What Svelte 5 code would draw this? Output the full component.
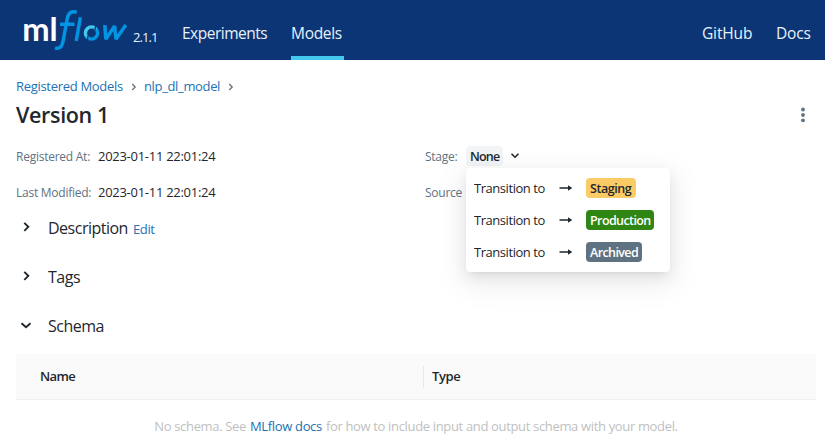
<script>
  const stages = [
    { name: 'Staging', kind: 'staging' },
    { name: 'Production', kind: 'production' },
    { name: 'Archived', kind: 'archived' },
  ];
  const sections = [
    { title: 'Description', edit: true, open: false },
    { title: 'Tags', edit: false, open: false },
    { title: 'Schema', edit: false, open: true },
  ];
</script>

{#snippet chevron(open)}
  <svg class="chevron" width="12" height="12" viewBox="0 0 12 12">
    <path d={open ? 'M1.5 4.2 6 8.2 10.5 4.2' : 'M4.3 1.8 8.3 5.8 4.3 9.8'} fill="none" stroke="currentColor" stroke-width="1.9" />
  </svg>
{/snippet}

<div class="page">
  <header>
    <svg class="logo" width="106" height="44" viewBox="0 0 106 44" role="img" aria-label="mlflow">
      <defs>
        <linearGradient id="ring" x1="0" y1="0" x2="1" y2="1">
          <stop offset="0.35" stop-color="#43c9ed" />
          <stop offset="0.65" stop-color="#0194e2" />
        </linearGradient>
      </defs>
      <text class="ml" x="-0.8" y="35" textLength="35.5" lengthAdjust="spacingAndGlyphs">ml</text>
      <path class="stroke" d="M53.8 6.3C48 4.6 45.3 7 44.3 12.5L40.3 34C39.2 40.5 36.8 43.5 32 41.8M37 18.2H51.5" />
      <path class="stroke" d="M57.4 11.3 53.2 35" />
      <circle cx="68.5" cy="27" r="6.1" fill="none" stroke="url(#ring)" stroke-width="3.4" />
      <path d="M64.5 34.5 65 29.500M72.500 19.500 72 24.500" stroke="#0b3574" stroke-width="1.300" />
      <path class="stroke" d="M81.8 19 82.8 33.2 91.6 20 92.9 33.2 102.8 19" />
    </svg>
    <span class="version">2.1.1</span>
    <nav>
      <a class="experiments" href="#experiments">Experiments</a>
      <a class="models" href="#models">Models</a>
    </nav>
    <nav class="right">
      <a class="github" href="#github">GitHub</a>
      <a class="docs" href="#docs">Docs</a>
    </nav>
  </header>

  <main>
    <div class="crumbs">
      <a class="registered" href="#models">Registered Models</a>
      <svg width="6" height="8" viewBox="0 0 6 8"><path d="M1.2 1 4.2 4 1.2 7" /></svg>
      <a class="model" href="#model">nlp_dl_model</a>
      <svg width="6" height="8" viewBox="0 0 6 8"><path d="M1.2 1 4.2 4 1.2 7" /></svg>
    </div>
    <div class="heading">
      <h1>Version 1</h1>
      <svg width="6" height="16" viewBox="0 0 6 16" fill="#5f7281"><circle cx="3" cy="2.5" r="1.9" /><circle cx="3" cy="8" r="1.9" /><circle cx="3" cy="13.3" r="1.9" /></svg>
    </div>

    <div class="meta">
      <div class="item"><span class="label l1">Registered At:</span><span class="value">2023-01-11 22:01:24</span></div>
      <div class="item stage">
        <span class="label l3">Stage:</span><span class="none">None</span>
        <svg width="10" height="8" viewBox="0 0 10 8"><path d="M1.5 1.8 5 5.2 8.5 1.8" fill="none" stroke="#1f272d" stroke-width="1.6" /></svg>
        <div class="menu">
          {#each stages as stage}
            <div class="option">
              <span class="to">Transition to</span>
              <svg width="14" height="8" viewBox="0 0 14 8"><path d="M0.5 3.3H10V4.7H0.5zM9 1.2 13.3 4 9 6.8z" fill="#1f272d" /></svg>
              <span class="tag {stage.kind}">{stage.name}</span>
            </div>
          {/each}
        </div>
      </div>
      <div class="item"><span class="label l2">Last Modified:</span><span class="value">2023-01-11 22:01:24</span></div>
      <div class="item"><span class="label l4">Source</span></div>
    </div>

    {#each sections as section}
      <section>
        {@render chevron(section.open)}
        <h2 class={section.title.toLowerCase()}>{section.title}</h2>
        {#if section.edit}<a class="edit" href="#edit">Edit</a>{/if}
      </section>
    {/each}

    <div class="table">
      <div class="name">Name</div>
      <div class="type"><span>Type</span></div>
    </div>
    <p class="empty"><span>No schema. See</span> <a href="#docs">MLflow docs</a> <span>for how to include input and output schema with your model.</span></p>
  </main>
</div>

<style>
  .page {
    width: 825px;
    height: 448px;
    overflow: hidden;
    background: #fff;
    color: #1f272d;
    font: 13px/20px 'Open Sans', 'Noto Sans', sans-serif;
    white-space: nowrap;
  }
  a { color: #2272b4; text-decoration: none; }
  header {
    box-sizing: border-box;
    height: 60px;
    padding: 0 14px 0 23px;
    display: flex;
    align-items: flex-start;
    background: #0b3574;
  }
  .logo { margin-top: 6px; flex: none; overflow: visible; }
  .ml { font: 700 32px Lato, sans-serif; fill: #fff; }
  .stroke { fill: none; stroke: #0194e2; stroke-width: 3.5; stroke-linejoin: bevel; }
  .version { margin: 27px 0 0 4px; width: 25px; color: #e7f1fb; letter-spacing: -0.9px; }
  nav { display: flex; height: 60px; margin-left: 24px; gap: 23px; font-size: 15.5px; line-height: 67px; letter-spacing: -0.3px; }
  nav a { box-sizing: border-box; height: 60px; color: #e7f1fb; }
  .experiments { width: 86px; letter-spacing: -0.5px; }
  .models { width: 53px; border-bottom: 4px solid #43c9ed; }
  .right { margin-left: auto; letter-spacing: -0.15px; }
  .github { width: 51px; }
  .docs { width: 35px; }
  main { padding: 16px 9px 0 16px; }
  .crumbs { display: flex; height: 20px; align-items: center; }
  .crumbs svg { margin: 1px 7.5px 0 7.5px; fill: none; stroke: #5f7281; stroke-width: 1.3; }
  .registered { width: 107px; letter-spacing: -0.3px; }
  .model { width: 76px; letter-spacing: -0.35px; }
  .heading { display: flex; height: 36px; align-items: center; justify-content: space-between; }
  .heading svg { margin: 2px 10px 0 0; }
  h1 { margin: 0; padding-top: 2px; font-size: 21.5px; line-height: 34px; font-weight: 550; letter-spacing: -0.35px; }
  .meta { display: grid; grid-template-columns: 409px 1fr; grid-auto-rows: 36px; margin-top: 6px; }
  .item { display: flex; align-items: center; height: 36px; position: relative; }
  .label { padding-top: 1px; color: #5f7281; font-size: 12px; letter-spacing: -0.25px; }
  .l1, .l2 { width: 82px; }
  .l3 { width: 41px; }
  .value { letter-spacing: -0.28px; }
  .none { box-sizing: border-box; width: 37px; height: 20px; padding: 1px 0 0 4px; line-height: 19px; border-radius: 4px; background: #f2f4f6; font-size: 12.5px; font-weight: 600; letter-spacing: -0.8px; }
  .stage svg { margin-left: 7px; }
  .menu {
    position: absolute;
    z-index: 1;
    left: 41px;
    top: 30px;
    box-sizing: border-box;
    width: 204px;
    height: 104px;
    padding: 4px 8px;
    border-radius: 4px;
    background: #fff;
    box-shadow: 0 3px 6px -4px rgba(0, 0, 0, 0.12), 0 6px 16px rgba(0, 0, 0, 0.08), 0 9px 28px 8px rgba(0, 0, 0, 0.05);
  }
  .option { display: flex; height: 32px; align-items: center; }
  .option svg { flex: none; margin: 0 13px 0 7px; }
  .to { flex: none; width: 78px; letter-spacing: -0.45px; }
  .tag { box-sizing: border-box; flex: none; height: 20px; padding: 1px 0 0 4px; border-radius: 4px; color: #fff; font-size: 12.5px; font-weight: 600; letter-spacing: -0.6px; }
  .staging { width: 50px; background: #fbcb66; color: #1f272d; letter-spacing: -0.45px; }
  .production { width: 68px; background: #308613; }
  .archived { width: 56px; background: #5f7281; }
  section { display: flex; height: 49px; padding-left: 4px; align-items: center; }
  .meta + section { margin-top: -7px; }
  .chevron { flex: none; margin: 0 16px 1px 0; }
  h2 { margin: 0; padding-top: 1px; font-size: 16px; line-height: 24px; font-weight: 400; letter-spacing: -0.5px; }
  .description { width: 80px; }
  .edit { margin-left: 5px; padding-top: 3px; letter-spacing: -0.4px; }
  .table { box-sizing: border-box; height: 46px; margin-top: 4px; display: flex; align-items: center; border-bottom: 1px solid #f0f0f0; border-radius: 2px 2px 0 0; background: #fafafa; font-weight: 600; letter-spacing: -0.6px; }
  .name { box-sizing: border-box; width: 407px; height: 22px; padding-left: 24px; }
  .type { height: 22px; padding-left: 8px; border-left: 1px solid #e8e8e8; letter-spacing: -0.4px; }
  .empty { display: flex; gap: 4px; justify-content: center; margin: 16px 0 0; color: #bfbfbf; letter-spacing: -0.34px; }
</style>
